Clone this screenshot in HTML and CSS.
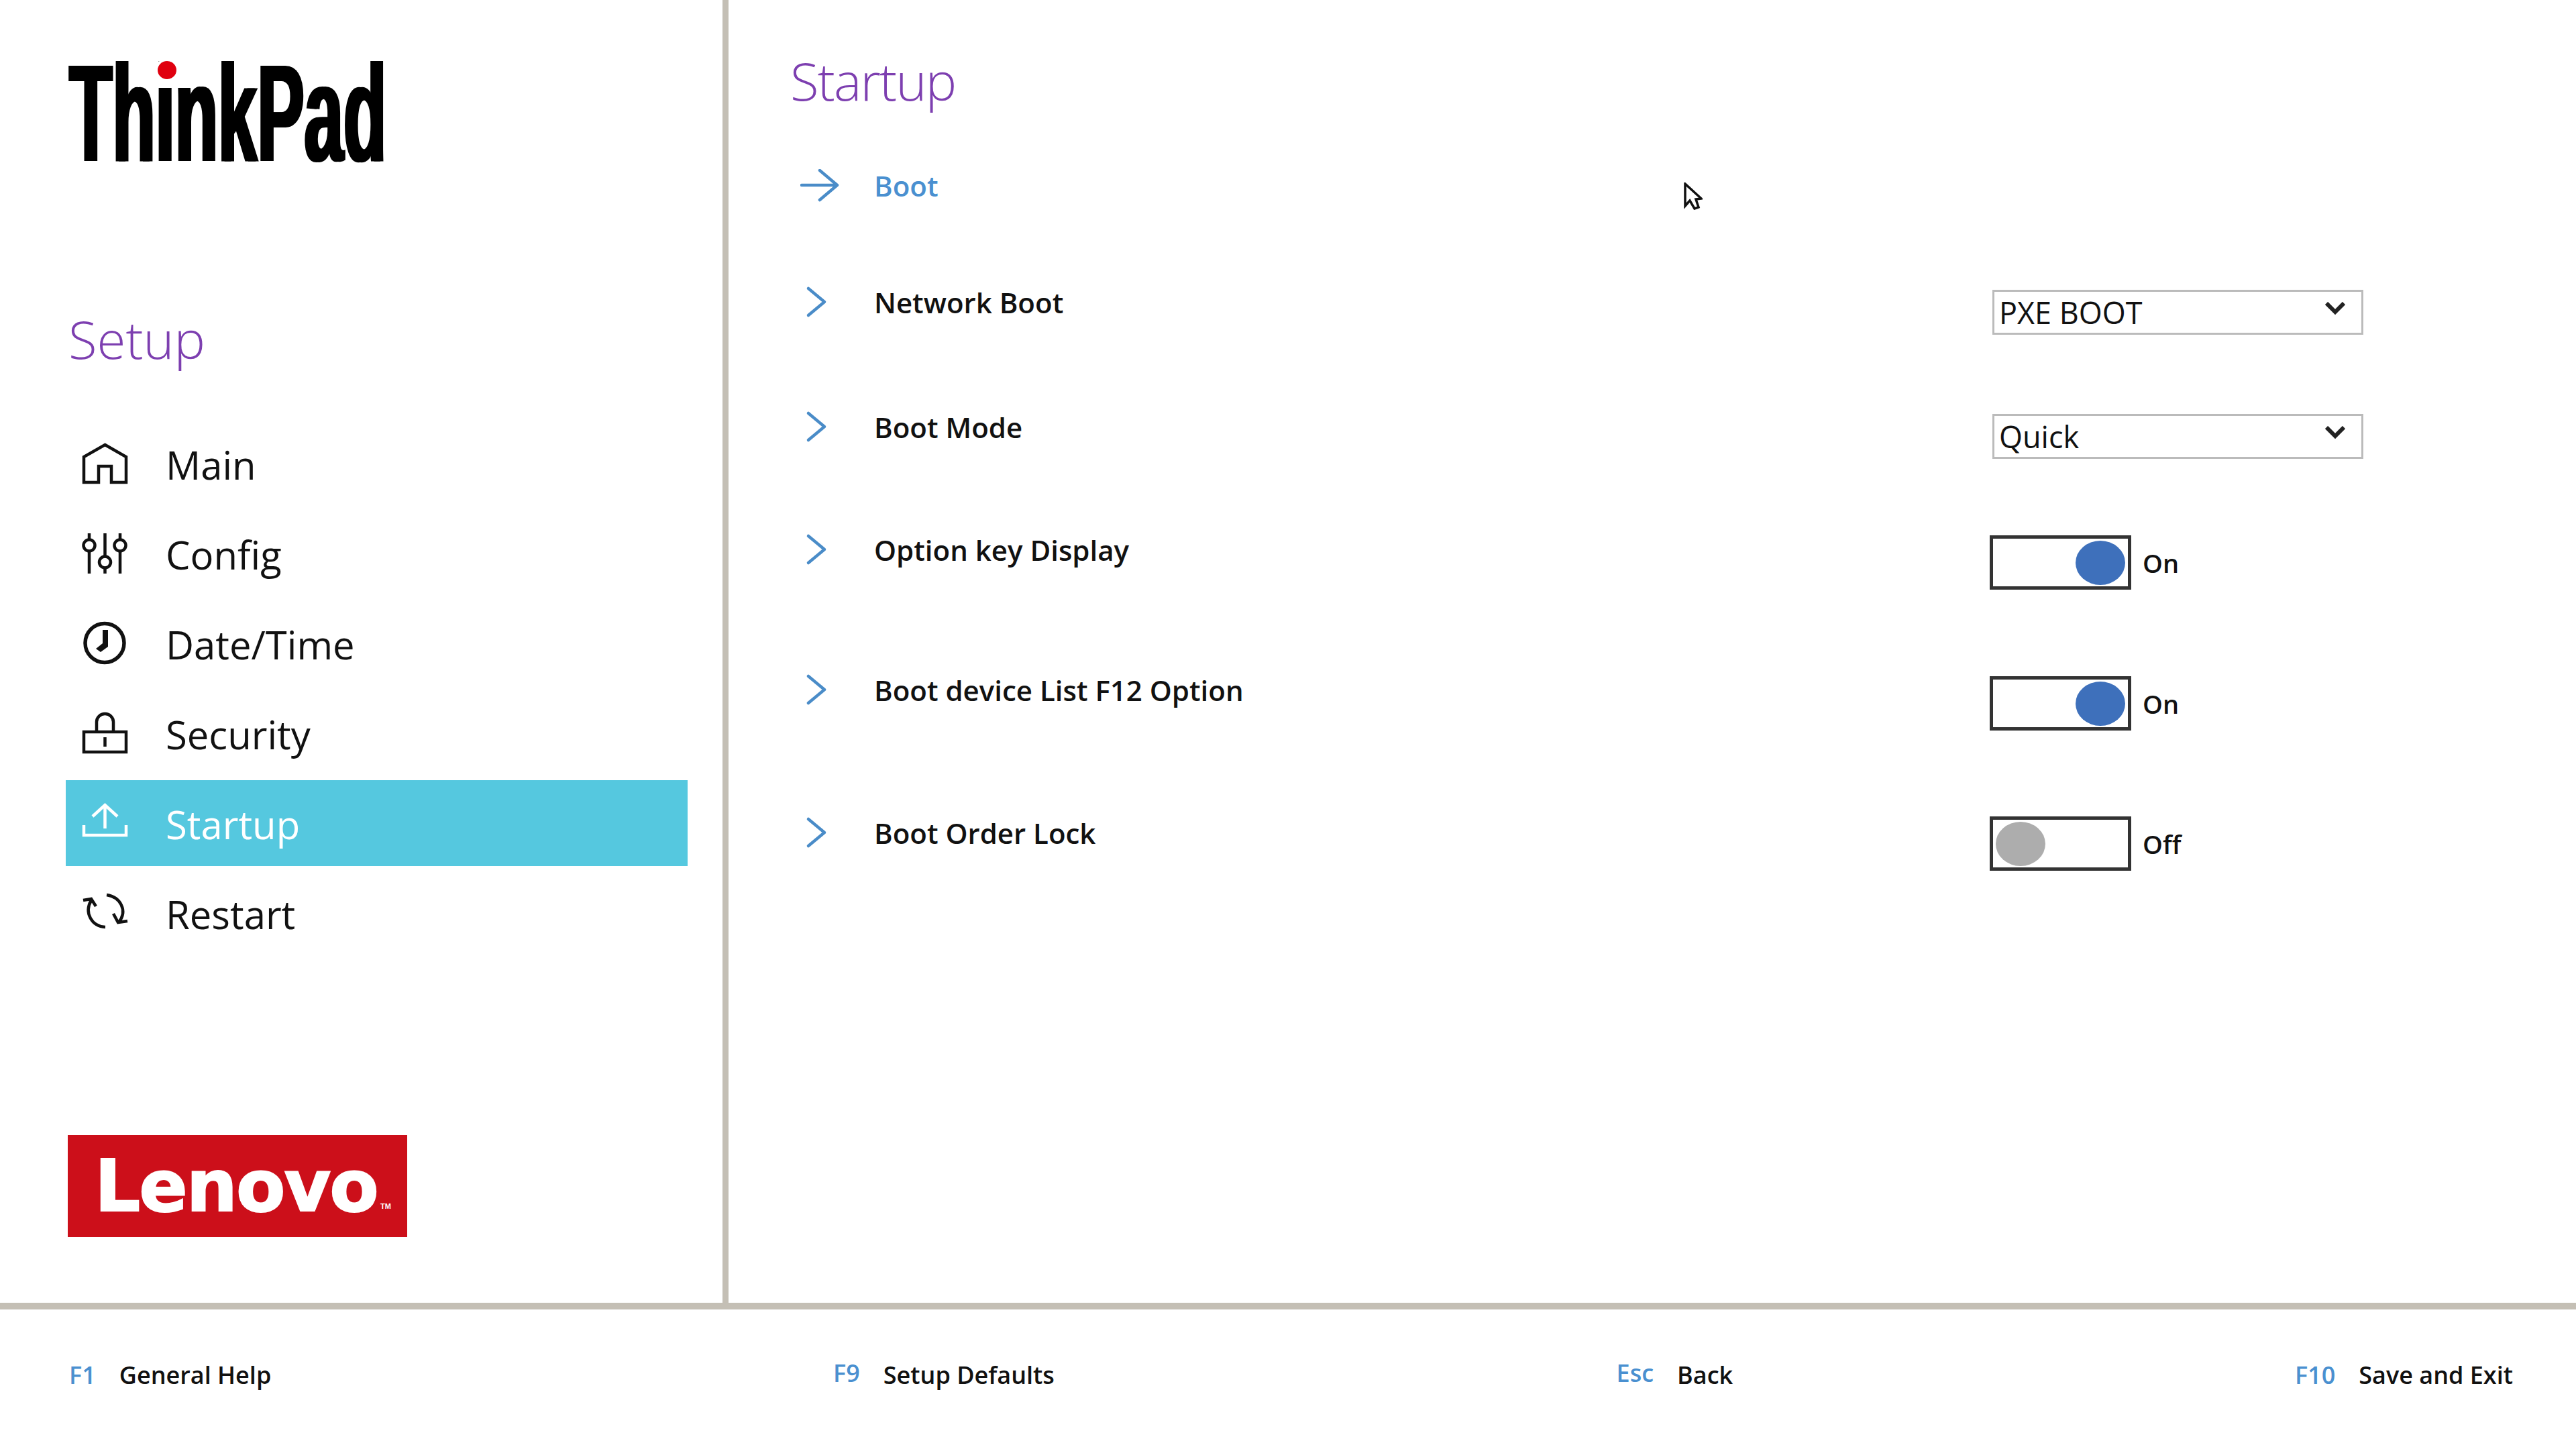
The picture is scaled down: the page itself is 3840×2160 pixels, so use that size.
FILE: index.html
```html
<!DOCTYPE html>
<html lang="en">
<head>
<meta charset="utf-8">
<title>ThinkPad Setup</title>
<link rel="stylesheet" href="styles.css">
</head>
<body>
<div class="screen">
  <div class="top">
    <aside class="sidebar">
      <div class="thinkpad"><span class="thinkpad-text">ThinkPad</span><span class="thinkpad-dot"></span></div>
      <h2 class="setup-title">Setup</h2>
      <nav class="nav">
        <div class="nav-row">
          <svg class="nav-icon" viewBox="0 0 67 60"><path d="M33.5 2 65 20V58H43V34H24V58H2V20Z"/></svg>
          <span>Main</span>
        </div>
        <div class="nav-row">
          <svg class="nav-icon" viewBox="0 0 67 60"><path d="M10 0V9M10 27V60M33.5 0V34M33.5 52V60M56 0V9M56 27V60"/><circle cx="10" cy="18" r="8.5"/><circle cx="33.5" cy="43" r="8.5"/><circle cx="56" cy="18" r="8.5"/></svg>
          <span>Config</span>
        </div>
        <div class="nav-row">
          <svg class="nav-icon" viewBox="0 0 67 60"><circle cx="33" cy="29.5" r="29" stroke-width="5.5"/><path class="solid" d="M30 10H38V35L27 43 20 38 30 30Z"/></svg>
          <span>Date/Time</span>
        </div>
        <div class="nav-row">
          <svg class="nav-icon" viewBox="0 0 67 60"><path d="M2 28H65V58H2ZM21 28V13A12.500 12 0 0 1 46 13V28M33.500 36V50"/></svg>
          <span>Security</span>
        </div>
        <div class="nav-row nav-active">
          <svg class="nav-icon" viewBox="0 0 67 60"><path d="M2 33V48H65V33M33.500 38V3M15 20 33.500 3 52 20"/></svg>
          <span>Startup</span>
        </div>
        <div class="nav-row">
          <svg class="nav-icon" viewBox="0 0 67 60"><path d="M34 51C14 50 2 30 13 11M1 11 13 9 20 20M36 3C56 6 68 26 54 44M46 31 53 44 67 42"/></svg>
          <span>Restart</span>
        </div>
      </nav>
      <div class="lenovo"><span class="lenovo-text">Lenovo</span><span class="lenovo-tm">TM</span></div>
    </aside>
    <main class="panel">
      <h1 class="panel-title">Startup</h1>
      <div class="settings">
        <div class="label label-current">
          <svg class="row-icon" viewBox="0 0 60 50"><path d="M2 24H55M29 2 55 24 29 46"/></svg>
          <span>Boot</span>
        </div>
        <div></div>

        <div class="label">
          <svg class="row-icon" viewBox="0 0 60 50"><path d="M12 4 36 24 12 44"/></svg>
          <span>Network Boot</span>
        </div>
        <div class="select offset-6"><span>PXE BOOT</span><svg class="select-arrow" viewBox="0 0 30 20"><path d="M2 2 15 15 28 2"/></svg></div>

        <div class="label">
          <svg class="row-icon" viewBox="0 0 60 50"><path d="M12 4 36 24 12 44"/></svg>
          <span>Boot Mode</span>
        </div>
        <div class="select offset-5"><span>Quick</span><svg class="select-arrow" viewBox="0 0 30 20"><path d="M2 2 15 15 28 2"/></svg></div>

        <div class="label">
          <svg class="row-icon" viewBox="0 0 60 50"><path d="M12 4 36 24 12 44"/></svg>
          <span>Option key Display</span>
        </div>
        <div class="switch offset-3"><div class="track track-on"><span class="knob knob-on"></span></div><span class="switch-text">On</span></div>

        <div class="label">
          <svg class="row-icon" viewBox="0 0 60 50"><path d="M12 4 36 24 12 44"/></svg>
          <span>Boot device List F12 Option</span>
        </div>
        <div class="switch offset-4"><div class="track track-on"><span class="knob knob-on"></span></div><span class="switch-text">On</span></div>

        <div class="label">
          <svg class="row-icon" viewBox="0 0 60 50"><path d="M12 4 36 24 12 44"/></svg>
          <span>Boot Order Lock</span>
        </div>
        <div class="switch"><div class="track"><span class="knob knob-off"></span></div><span class="switch-text">Off</span></div>
      </div>
    </main>
  </div>
  <footer class="footer">
    <div class="hint"><span class="key">F1</span><span>General Help</span></div>
    <div class="hint"><span class="key key-raised">F9</span><span>Setup Defaults</span></div>
    <div class="hint"><span class="key key-raised">Esc</span><span>Back</span></div>
    <div class="hint"><span class="key">F10</span><span>Save and Exit</span></div>
  </footer>
  <svg class="cursor" viewBox="0 0 28 41"><path d="M2 2V35L9 27 16 39 22 37 18 25 26 24Z"/></svg>
</div>
</body>
</html>
```
FILE: styles.css
```css
* { box-sizing: border-box; }
html, body { margin: 0; padding: 0; background: #fff; }
body { font-family: "Open Sans", "Liberation Sans", sans-serif; color: #000; }

.screen { position: relative; width: 3840px; height: 2160px; overflow: hidden; display: flex; flex-direction: column; }
.top { height: 1952px; display: flex; border-bottom: 10px solid #c4bfb5; }

.sidebar { width: 1086px; height: 1942px; padding: 91px 52px 98px 98px; border-right: 9px solid #c4bfb5; display: flex; flex-direction: column; }

.thinkpad { position: relative; width: 478px; height: 153px; margin-left: 3px; flex: none; }
.thinkpad-text { display: block; font-family: "Liberation Sans", sans-serif; font-weight: 700; font-size: 206px; line-height: 157px; white-space: nowrap; color: #000; transform: scaleX(0.51); transform-origin: 0 0; text-shadow: 9px 0 0 #000; }
.thinkpad-dot { position: absolute; left: 134px; top: 0; width: 28px; height: 27px; border-radius: 50%; background: #e0000f; box-shadow: 0 0 0 4px #fff; }

.setup-title { margin: 206px 0 0 4px; font-weight: 300; font-size: 78px; line-height: 110px; color: #7d3fb0; }

.nav { margin-top: 67px; display: flex; flex-direction: column; gap: 6px; }
.nav-row { height: 128px; display: flex; align-items: center; padding-left: 25px; gap: 57px; font-weight: 400; font-size: 58px; color: #111; }
.nav-row span { padding-top: 3px; }
.nav-active { background: #55c8df; color: #fff; }
.nav-icon { width: 67px; height: 60px; flex: none; fill: none; stroke: currentColor; stroke-width: 4.500; overflow: visible; }
.nav-icon .solid { fill: currentColor; stroke: none; }

.lenovo { margin: auto 0 0 3px; width: 506px; height: 152px; background: #cc0f1a; color: #fff; display: flex; align-items: center; padding-left: 40px; flex: none; position: relative; }
.lenovo-text { font-family: "DejaVu Sans", sans-serif; font-weight: 700; font-size: 107px; line-height: 152px; letter-spacing: -2px; -webkit-text-stroke: 2px #fff; }
.lenovo-tm { position: absolute; left: 466px; top: 100px; font-family: "Liberation Sans", sans-serif; font-weight: 700; font-size: 11px; }

.panel { flex: 1; padding: 60px 0 0 92px; }
.panel-title { margin: 0 0 72px; font-weight: 300; font-size: 78px; line-height: 120px; letter-spacing: -1.800px; color: #7d3fb0; }

.settings { margin-left: 15px; display: grid; grid-template-columns: 1773px auto; grid-template-rows: 174px 186px 183px 209px 213px auto; align-items: start; }
.label { display: flex; align-items: flex-start; gap: 50px; font-weight: 600; font-size: 42px; line-height: 50px; color: #111; }
.label-current { color: #4a90d0; }
.row-icon { width: 60px; height: 50px; flex: none; fill: none; stroke: #4a8cc8; stroke-width: 4.500; stroke-linecap: round; stroke-linejoin: round; }

.offset-6 { margin-top: 6px; }
.offset-5 { margin-top: 5px; }
.offset-4 { margin-top: 4px; }
.offset-3 { margin-top: 3px; }

.select { margin-left: 4px; width: 553px; height: 67px; border: 3px solid #bbb; display: flex; align-items: center; justify-content: space-between; padding: 0 24px 0 7px; font-weight: 400; font-size: 45px; color: #111; }
.select-arrow { width: 30px; height: 20px; flex: none; margin-top: -12px; fill: none; stroke: #222; stroke-width: 6; }

.switch { display: flex; align-items: center; gap: 17px; }
.track { width: 211px; height: 81px; border: 5px solid #333; display: flex; align-items: center; justify-content: flex-start; padding: 0 4px; }
.track-on { justify-content: flex-end; }
.knob { width: 74px; height: 66px; border-radius: 50%; }
.knob-on { background: #3e70bb; }
.knob-off { background: #adadad; }
.switch-text { font-weight: 600; font-size: 38px; color: #111; }

.footer { flex: 1; display: flex; justify-content: space-between; align-items: flex-start; padding: 73px 94px 0 103px; font-weight: 600; font-size: 36px; line-height: 50px; color: #111; }
.hint { display: flex; align-items: flex-start; gap: 35px; }
.key { color: #4a90d0; }
.key-raised { margin-top: -3px; }

.cursor { position: absolute; left: 2510px; top: 272px; width: 28px; height: 41px; fill: #fff; stroke: #111; stroke-width: 3.500; }
```
